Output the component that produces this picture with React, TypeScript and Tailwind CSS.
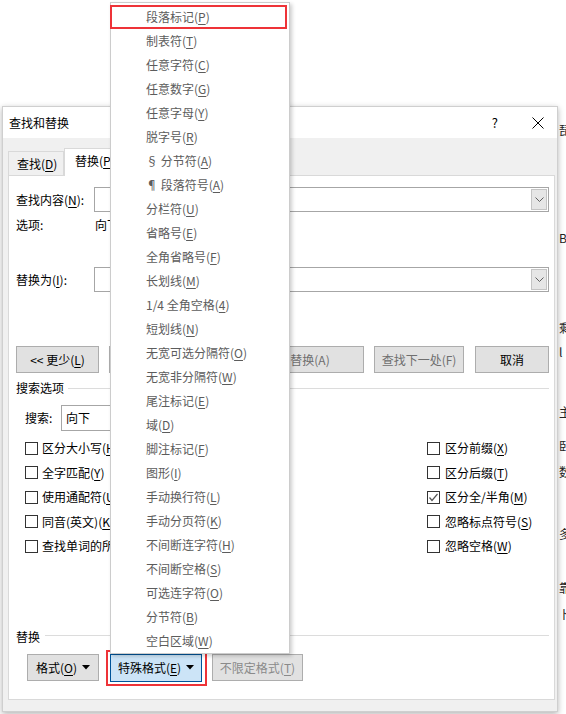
import React from "react"

const menuItems: [string, string][] = [
  ["段落标记", "P"],
  ["制表符", "T"],
  ["任意字符", "C"],
  ["任意数字", "G"],
  ["任意字母", "Y"],
  ["脱字号", "R"],
  ["§ 分节符", "A"],
  ["¶ 段落符号", "A"],
  ["分栏符", "U"],
  ["省略号", "E"],
  ["全角省略号", "F"],
  ["长划线", "M"],
  ["1/4 全角空格", "4"],
  ["短划线", "N"],
  ["无宽可选分隔符", "O"],
  ["无宽非分隔符", "W"],
  ["尾注标记", "E"],
  ["域", "D"],
  ["脚注标记", "F"],
  ["图形", "I"],
  ["手动换行符", "L"],
  ["手动分页符", "K"],
  ["不间断连字符", "H"],
  ["不间断空格", "S"],
  ["可选连字符", "O"],
  ["分节符", "B"],
  ["空白区域", "W"],
]

const leftChecks: [string, string][] = [
  ["区分大小写", "H"],
  ["全字匹配", "Y"],
  ["使用通配符", "U"],
  ["同音(英文)", "K"],
  ["查找单词的所有形式(英文)", "W"],
]

const rightChecks: [string, string, boolean][] = [
  ["区分前缀", "X", false],
  ["区分后缀", "T", false],
  ["区分全/半角", "M", true],
  ["忽略标点符号", "S", false],
  ["忽略空格", "W", false],
]

function Acc({ label, k, tail = "" }: { label: string; k: string; tail?: string }) {
  return (
    <span className="whitespace-nowrap">
      {label}(<span className="underline underline-offset-[2px] decoration-1">{k}</span>){tail}
    </span>
  )
}

function Chevron() {
  return (
    <svg width="9" height="6" viewBox="0 0 9 6">
      <polyline points="0.5,0.5 4.5,4.5 8.5,0.5" fill="none" stroke="#606060" strokeWidth="1" />
    </svg>
  )
}

function Caret() {
  return (
    <svg width="8" height="5" viewBox="0 0 8 5" className="ml-[5px]">
      <polygon points="0,0 8,0 4,4.5" fill="#000" />
    </svg>
  )
}

function Combo() {
  return (
    <div className="h-[25px] flex-1 border border-[#a6a6a6] bg-white flex justify-end p-px">
      <div className="w-[16px] h-full bg-[#e6e6e6] border border-[#c4c4c4] flex items-center justify-center">
        <Chevron />
      </div>
    </div>
  )
}

function Box({ checked }: { checked?: boolean }) {
  return (
    <div className="w-[13px] h-[13px] border border-[#333] bg-white flex items-center justify-center shrink-0">
      {checked && (
        <svg width="11" height="11" viewBox="0 0 11 11">
          <polyline points="1.5,5.5 4,8.5 9.5,2" fill="none" stroke="#555" strokeWidth="1.2" />
        </svg>
      )}
    </div>
  )
}

function Btn({
  children,
  w,
  muted,
}: {
  children: React.ReactNode
  w: string
  muted?: boolean
}) {
  return (
    <div
      className={`${w} h-[27px] shrink-0 bg-[#e1e1e1] border border-[#adadad] flex items-center justify-center ${
        muted ? "text-[#6f6f6f]" : "text-black"
      }`}
    >
      {children}
    </div>
  )
}

export default function App() {
  return (
    <div className="relative w-[566px] h-[714px] overflow-hidden bg-white text-[12px] leading-[16px] text-black font-['Noto_Sans_CJK_SC','Microsoft_YaHei',sans-serif]">
      <div className="flex pt-[106px]">
        {/* document text peeking out on the left */}
        <div className="w-[2px] overflow-hidden shrink-0">
          <div className="-ml-[10px] flex flex-col text-[#222] text-[12px] leading-[16px]">
            <span className="mt-[42px]">I</span>
            <span className="mt-[22px]">l</span>
            <span className="mt-[4px]">I</span>
            <span className="mt-[100px]">l</span>
            <span className="mt-[60px]">I</span>
          </div>
        </div>

        {/* dialog */}
        <div className="w-[556px] h-[606px] shrink-0 bg-[#f0f0f0] border border-[#cfcfcf] shadow-[0_2px_6px_rgba(0,0,0,0.3)] flex flex-col">
          <div className="h-[31px] bg-white flex items-center pl-[6px] pr-[8px]">
            <span>查找和替换</span>
            <span className="ml-auto mr-[34px] text-[13px]">?</span>
            <svg width="12" height="12" viewBox="0 0 12 12" className="mr-[5px]">
              <line x1="0.5" y1="0.5" x2="11.5" y2="11.5" stroke="#000" strokeWidth="1" />
              <line x1="11.5" y1="0.5" x2="0.5" y2="11.5" stroke="#000" strokeWidth="1" />
            </svg>
          </div>

          <div className="h-[37px] flex items-end pl-[5px]">
            <div className="w-[56px] h-[24px] border border-b-0 border-[#d9d9d9] bg-[#f0f0f0] flex items-center pl-[8px]">
              <Acc label="查找" k="D" />
            </div>
            <div className="w-[58px] h-[28px] -mb-px z-10 border border-b-0 border-[#d9d9d9] bg-white flex items-center pl-[10px] pb-[4px]">
              <Acc label="替换" k="P" />
            </div>
          </div>

          <div className="ml-[5px] w-[547px] h-[525px] bg-white border border-[#d9d9d9] flex flex-col pl-[7px] pr-[5px] pt-[11px]">
            <div className="flex items-center">
              <div className="w-[78px]">
                <Acc label="查找内容" k="N" tail=":" />
              </div>
              <Combo />
            </div>
            <div className="flex h-[16px] mt-[5px]">
              <div className="w-[79px]">选项:</div>
              <div>向下, 区分全/半角</div>
            </div>
            <div className="flex items-center mt-[34px]">
              <div className="w-[78px]">
                <Acc label="替换为" k="I" tail=":" />
              </div>
              <Combo />
            </div>

            <div className="flex mt-[54px]">
              <Btn w="w-[83px]">
                <span className="whitespace-nowrap">
                  &lt;&lt; 更少(<span className="underline underline-offset-[2px]">L</span>)
                </span>
              </Btn>
              <div className="ml-[10px]">
                <Btn w="w-[112px]" muted>
                  <Acc label="替换" k="R" />
                </Btn>
              </div>
              <div className="ml-auto flex gap-[10px]">
                <Btn w="w-[132px]" muted>
                  全部替换(A)
                </Btn>
                <Btn w="w-[90px]" muted>
                  查找下一处(F)
                </Btn>
                <div className="ml-px">
                  <Btn w="w-[74px]">取消</Btn>
                </div>
              </div>
            </div>

            <div className="flex items-center h-[16px] mt-[7px]">
              <span>搜索选项</span>
              <div className="flex-1 h-px bg-[#dcdcdc] ml-[4px]" />
            </div>

            <div className="flex items-center mt-[9px] pl-[9px]">
              <span className="w-[36px]">搜索:</span>
              <div className="w-[175px] h-[26px] border border-[#a6a6a6] flex items-center pl-[4px]">向下</div>
            </div>

            <div className="flex mt-[5px] pl-[9px]">
              <div className="w-[402px] flex flex-col">
                {leftChecks.map(([label, k]) => (
                  <div key={label} className="h-[24.5px] flex items-center gap-[4px]">
                    <Box />
                    <Acc label={label} k={k} />
                  </div>
                ))}
              </div>
              <div className="flex flex-col">
                {rightChecks.map(([label, k, c]) => (
                  <div key={label} className="h-[24.5px] flex items-center gap-[5px]">
                    <Box checked={c} />
                    <Acc label={label} k={k} />
                  </div>
                ))}
              </div>
            </div>

            <div className="flex items-center h-[16px] mt-[70px]">
              <span>替换</span>
              <div className="flex-1 h-px bg-[#dcdcdc] ml-[5px] -mt-[3px]" />
            </div>

            <div className="flex items-center mt-[5px] pl-[11px]">
              <Btn w="w-[72px]">
                <Acc label="格式" k="O" />
                <Caret />
              </Btn>
              <div className="ml-[7px] border-2 border-[#ee3338] pl-[2px] pr-[3px] py-[2px]">
                <div className="w-[92px] h-[28px] bg-[#cce4f7] border border-[#005499] flex items-center justify-center">
                  <Acc label="特殊格式" k="E" />
                  <Caret />
                </div>
              </div>
              <div className="ml-[5px]">
                <Btn w="w-[91px]" muted>
                  <span className="text-[#8a8a8a]">
                    <Acc label="不限定格式" k="T" />
                  </span>
                </Btn>
              </div>
            </div>
          </div>
        </div>

        {/* document text peeking out on the right */}
        <div className="flex-1 overflow-hidden">
          <div className="flex flex-col pl-[1px] text-[#222] text-[12px] leading-[16px]">
            <span className="mt-[16px]">琵</span>
            <span className="mt-[92px]">B</span>
            <span className="mt-[74px]">剩</span>
            <span className="mt-[8px]">l</span>
            <span className="mt-[44px]">主</span>
            <span className="mt-[18px]">卧</span>
            <span className="mt-[10px]">数</span>
            <span className="mt-[46px]">多</span>
            <span className="mt-[38px]">靠</span>
            <span className="mt-[10px]">卜</span>
          </div>
        </div>
      </div>

      {/* special format dropdown menu */}
      <div className="absolute z-20 left-[110px] top-[2px] w-[180px] bg-white border border-[#cccccc] shadow-[2px_2px_4px_rgba(0,0,0,0.2)] pt-[2px] text-[#5c5c5c]">
        {menuItems.map(([label, k], i) => (
          <div
            key={i}
            className={`h-[24px] flex items-center ${
              i === 0 ? "-ml-px mr-[2px] border-2 border-[#ee3338] pl-[34px]" : "pl-[35px]"
            }`}
          >
            <Acc label={label} k={k} />
          </div>
        ))}
      </div>
    </div>
  )
}
